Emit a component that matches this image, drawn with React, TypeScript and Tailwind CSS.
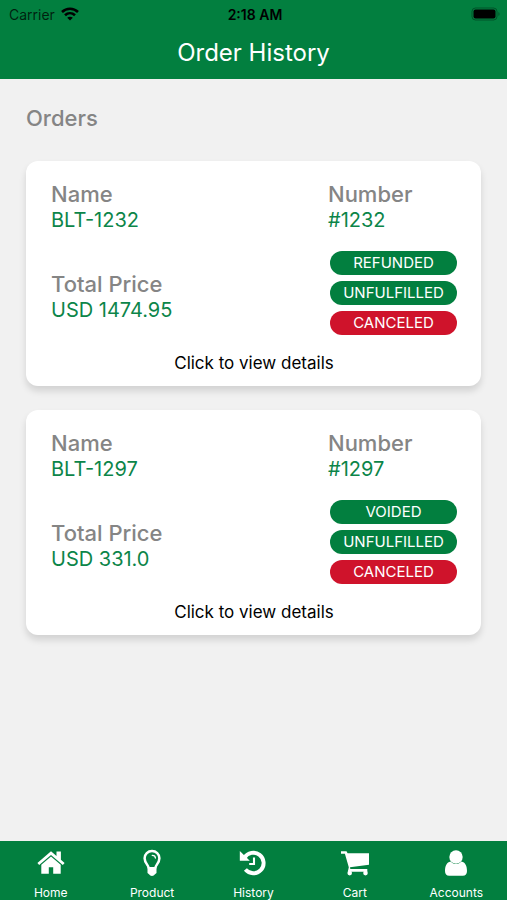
import React from "react";

type Order = { name: string; number: string; price: string; statuses: string[] };

const orders: Order[] = [
  { name: "BLT-1232", number: "#1232", price: "USD 1474.95", statuses: ["REFUNDED", "UNFULFILLED", "CANCELED"] },
  { name: "BLT-1297", number: "#1297", price: "USD 331.0", statuses: ["VOIDED", "UNFULFILLED", "CANCELED"] },
];

function WifiIcon() {
  return (
    <svg viewBox="0 0 18 14" className="h-[14px] w-[18px]" fill="none" stroke="currentColor" strokeWidth="2.6" aria-hidden="true">
      <path d="M1 5C5.500.7 12.500.7 17 5" />
      <path d="M4 8.300c2.900-2.700 7.100-2.700 10 0" />
      <path d="M9 13.500 6.200 10.700c1.600-1.400 4-1.400 5.600 0z" fill="currentColor" stroke="none" />
    </svg>
  );
}

function BatteryIcon() {
  return (
    <svg viewBox="0 0 30 14" className="h-[14px] w-[30px]" aria-hidden="true">
      <rect x="1" y="1" width="25" height="12" rx="3.500" fill="none" stroke="#000" strokeOpacity=".35" />
      <rect x="2.500" y="2.500" width="22" height="9" rx="2" fill="#000" />
      <path d="M27.500 5v4c1.300-.6 1.300-3.400 0-4z" fill="#000" fillOpacity=".4" />
    </svg>
  );
}

function HomeIcon() {
  return (
    <svg viewBox="0 0 28 28" className="size-7" fill="currentColor" aria-hidden="true">
      <path d="M14 2.300 .4 13.900l1.800 2L14 6l11.800 9.900 1.800-2-3.700-3.200V2.500h-4.400v4.400z" />
      <path d="M14 7.500 4.300 15.700V24.700h7.500v-6.400h4.400v6.400h7.500v-9z" />
    </svg>
  );
}

function BulbIcon() {
  return (
    <svg viewBox="0 0 28 28" className="size-7" fill="none" stroke="currentColor" aria-hidden="true">
      <path d="M10.800 19.500c0-3.500-4.200-5.200-4.200-10.200 0-4.200 3.300-7.200 7.400-7.200s7.400 3 7.400 7.200c0 5-4.200 6.700-4.200 10.200" strokeWidth="2.500" />
      <path d="M14.200 6.300c1.800 0 3.200 1.200 3.200 2.700" strokeWidth="1.300" strokeLinecap="round" />
      <path d="M9.500 18h9v6l-1.800 1.500c-.7 1.900-4.700 1.900-5.400 0l-1.800-1.500z" fill="currentColor" stroke="none" />
    </svg>
  );
}

function HistoryIcon() {
  return (
    <svg viewBox="0 0 28 28" className="size-7" fill="none" stroke="currentColor" aria-hidden="true">
      <path d="M5.500 8.700A10.300 10.300 0 1 1 6.400 20.600" strokeWidth="3.900" />
      <path d="M.8 2v9.800h10z" fill="currentColor" stroke="none" />
      <path d="M15 8.500v6.500h-4.800" strokeWidth="2.100" />
    </svg>
  );
}

function CartIcon() {
  return (
    <svg viewBox="0 0 28 28" className="size-7" fill="currentColor" aria-hidden="true">
      <path d="M0 2.300h5.500l1.100 2H28.300v11.400L9 18.200l.3 1.800h17v2.700H6.800l1-4.400L3.900 4.800H0z" />
      <circle cx="8.700" cy="24.100" r="2.300" />
      <circle cx="24.500" cy="24.100" r="2.300" />
    </svg>
  );
}

function UserIcon() {
  return (
    <svg viewBox="0 0 28 28" className="size-7" fill="currentColor" aria-hidden="true">
      <circle cx="14" cy="8" r="6.700" />
      <path d="M8.600 12.500C4.700 13.300 3 17 3 22c0 3 1.500 4.800 4.200 4.800h13.600c2.700 0 4.200-1.800 4.200-4.800 0-5-1.700-8.700-5.600-9.500-3.200 3.400-7.600 3.400-10.800 0z" />
    </svg>
  );
}

const tabs = [
  { label: "Home", icon: <HomeIcon /> },
  { label: "Product", icon: <BulbIcon /> },
  { label: "History", icon: <HistoryIcon /> },
  { label: "Cart", icon: <CartIcon /> },
  { label: "Accounts", icon: <UserIcon /> },
];

function Field({ label, value }: { label: string; value: string }) {
  return (
    <div>
      <div className="text-[22px] leading-[26px] font-medium text-[#858585]">{label}</div>
      <div className="text-[20px] leading-[26px] text-[#0c8549]">{value}</div>
    </div>
  );
}

function OrderCard({ order }: { order: Order }) {
  return (
    <button
      type="button"
      className="block w-full rounded-xl bg-white pt-5 pr-6 pb-[11px] pl-[25px] text-left shadow-[0_5px_7px_rgba(0,0,0,0.13)]"
    >
      <div className="grid grid-cols-[1fr_129px] gap-y-[18px]">
        <Field label="Name" value={order.name} />
        <Field label="Number" value={order.number} />
        <div className="self-end pb-3">
          <Field label="Total Price" value={order.price} />
        </div>
        <ul className="flex flex-col gap-1.5 pl-0.5">
          {order.statuses.map((status) => (
            <li
              key={status}
              className={`rounded-full text-center text-[15px] leading-6 text-white ${status === "CANCELED" ? "bg-[#cf132b]" : "bg-[#027f3f]"}`}
            >
              {status}
            </li>
          ))}
        </ul>
      </div>
      <div className="mt-4 text-center text-[17px] leading-6 text-black">Click to view details</div>
    </button>
  );
}

export default function App() {
  return (
    <div className="flex min-h-screen flex-col bg-[#f1f1f1] font-['Inter',sans-serif]">
      <header className="bg-[#027f3f]">
        <div className="grid h-7 grid-cols-3 items-center pr-1.5 pl-[9px] text-[14px] text-black">
          <div className="flex items-center gap-1.5 text-black/75">
            Carrier
            <span className="text-black"><WifiIcon /></span>
          </div>
          <time className="text-center font-semibold">2:18 AM</time>
          <div className="flex justify-end"><BatteryIcon /></div>
        </div>
        <h1 className="h-[51px] text-center text-[24px] leading-[50px] text-white">Order History</h1>
      </header>

      <main className="flex-1 px-[26px] pt-6">
        <h2 className="text-[22px] leading-[30px] font-medium text-[#858585]">Orders</h2>
        <div className="mt-7 flex flex-col gap-6">
          {orders.map((order) => (
            <OrderCard key={order.name} order={order} />
          ))}
        </div>
      </main>

      <nav aria-label="Main" className="grid h-[59px] grid-cols-5 bg-[#027f3f] text-white">
        {tabs.map((tab) => (
          <a key={tab.label} href={`#${tab.label.toLowerCase()}`} className="flex flex-col items-center pt-2">
            {tab.icon}
            <span className="mt-2 text-[12px] leading-4">{tab.label}</span>
          </a>
        ))}
      </nav>
    </div>
  );
}
